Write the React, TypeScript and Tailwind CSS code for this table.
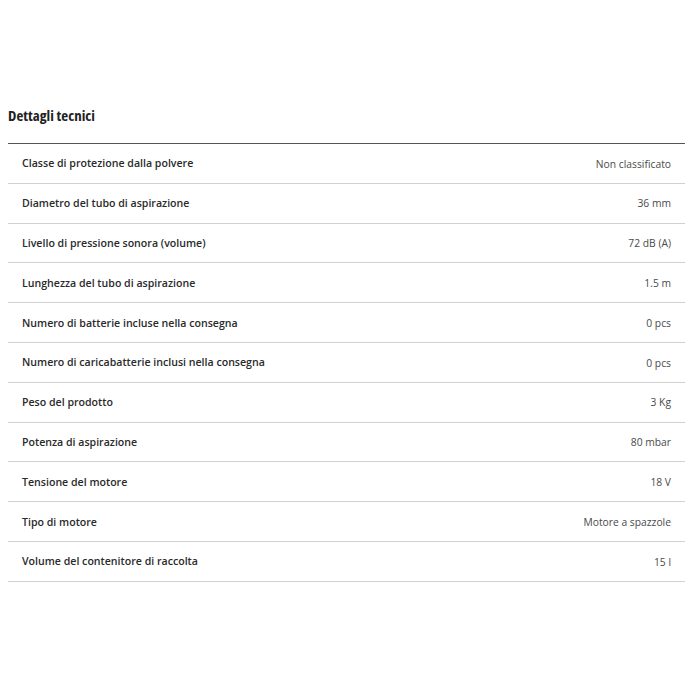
const rows: [string, string][] = [
  ['Classe di protezione dalla polvere', 'Non classificato'],
  ['Diametro del tubo di aspirazione', '36 mm'],
  ['Livello di pressione sonora (volume)', '72 dB (A)'],
  ['Lunghezza del tubo di aspirazione', '1.5 m'],
  ['Numero di batterie incluse nella consegna', '0 pcs'],
  ['Numero di caricabatterie inclusi nella consegna', '0 pcs'],
  ['Peso del prodotto', '3 Kg'],
  ['Potenza di aspirazione', '80 mbar'],
  ['Tensione del motore', '18 V'],
  ['Tipo di motore', 'Motore a spazzole'],
  ['Volume del contenitore di raccolta', '15 l'],
];

export default function App() {
  return (
    <div className="w-[700px] h-[700px] bg-white pt-[104px] pl-2 pr-[15px] font-['Open_Sans',sans-serif] text-[#333]">
      <h2 className="text-[15px] font-bold leading-[22px] mb-[17px] text-[#222] [font-stretch:75%]">Dettagli tecnici</h2>
      <div className="border-t-[1.5px] border-[#555]">
        {rows.map(([label, value]) => (
          <div key={label} className="flex items-center justify-between h-[39.8px] pt-[2px] px-[14px] border-b border-[#d0d0d0]">
            <span className="text-[10.6px] font-semibold text-[#2a2a2a]">{label}</span>
            <span className="text-[10.3px] text-[#4a4a4a]">{value}</span>
          </div>
        ))}
      </div>
    </div>
  );
}
